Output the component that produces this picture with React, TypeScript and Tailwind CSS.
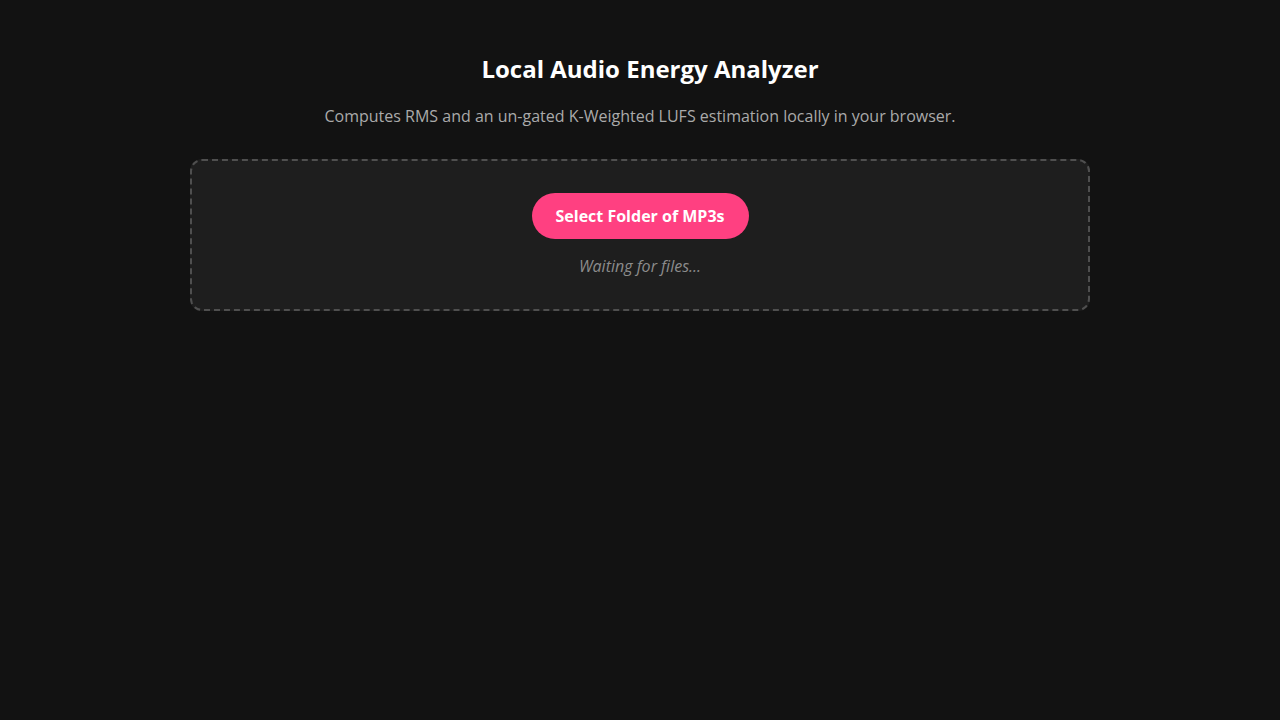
export default function App() {
  return (
    <div className="min-h-screen bg-[#121212] text-white" style={{ fontFamily: '"Open Sans", sans-serif' }}>
      <div className="mx-auto w-[900px] pt-[51px] text-center">
        <h1 className="pl-[20px] text-[24px] font-bold leading-[36px] text-white">Local Audio Energy Analyzer</h1>
        <p className="mt-[17px] text-[16px] leading-[24px] text-[#aaaaaa]">
          Computes RMS and an un-gated K-Weighted LUFS estimation locally in your browser.
        </p>
        <div className="mt-[31px] flex flex-col items-center rounded-[12px] border-2 border-dashed border-[#4f4f4f] bg-[#1e1e1e] pt-[32px] pb-[31px]">
          <button className="h-[46px] rounded-full bg-[#ff4081] px-[24px] text-[16px] font-bold text-white">
            Select Folder of MP3s
          </button>
          <p className="mt-[15px] text-[16px] italic leading-[24px] text-[#8c8c8c]">Waiting for files...</p>
        </div>
      </div>
    </div>
  );
}
